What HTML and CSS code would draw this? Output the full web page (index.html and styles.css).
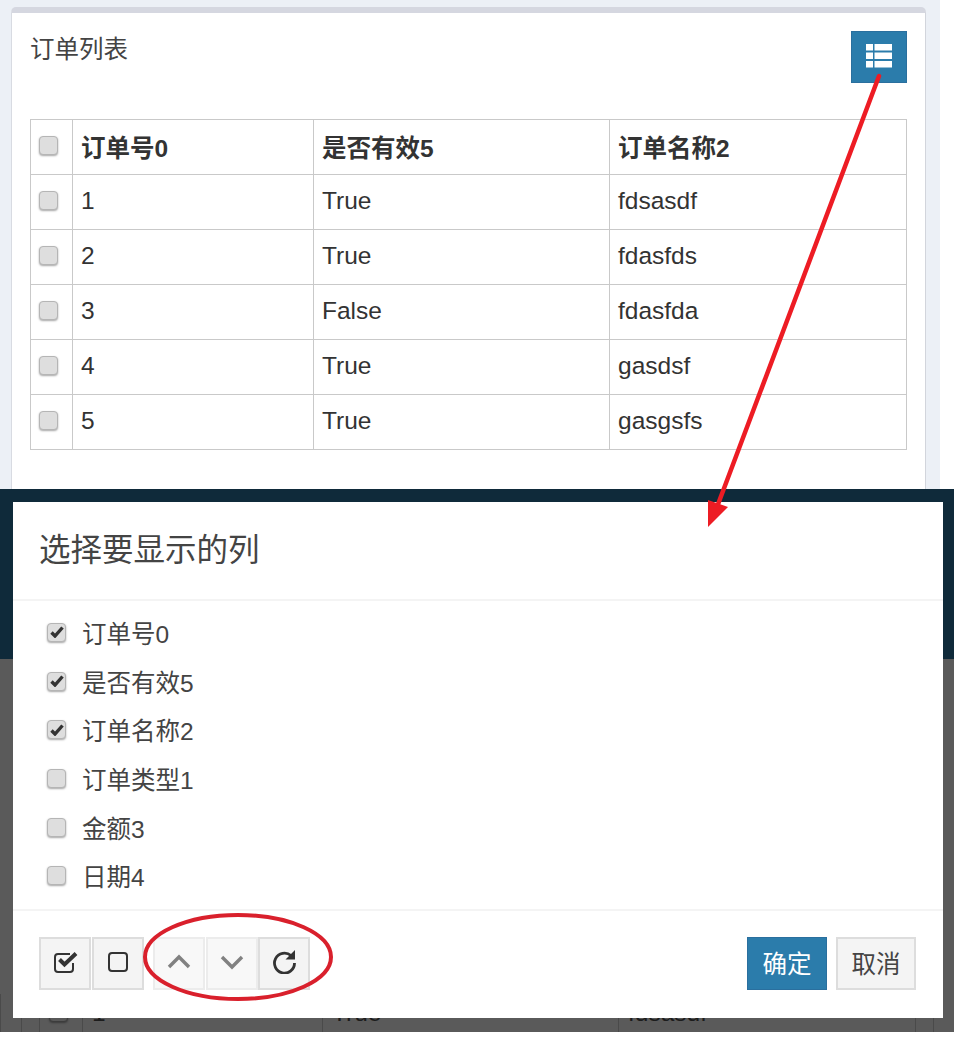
FILE: index.html
```html
<!DOCTYPE html>
<html lang="zh">
<head>
<meta charset="utf-8">
<title>订单列表</title>
<link rel="stylesheet" href="styles.css">
</head>
<body>
<div class="page">
  <section class="card">
    <header class="card-head">
      <h3 class="card-title">订单列表</h3>
      <button class="btn btn-primary btn-icon" type="button">
        <svg width="26" height="24" viewBox="0 0 26 24"><path fill="#fff" d="M0 0h7v6.500H0zM8.500 0H26v6.500H8.500zM0 8.500h7V15H0zM8.500 8.500H26V15H8.500zM0 17h7v6.500H0zM8.500 17H26v6.500H8.500z"/></svg>
      </button>
    </header>
    <table class="grid">
      <thead>
        <tr><th class="c-check"><span class="check"></span></th><th class="c-id">订单号0</th><th class="c-valid">是否有效5</th><th>订单名称2</th></tr>
      </thead>
      <tbody>
        <tr><td><span class="check"></span></td><td>1</td><td>True</td><td>fdsasdf</td></tr>
        <tr><td><span class="check"></span></td><td>2</td><td>True</td><td>fdasfds</td></tr>
        <tr><td><span class="check"></span></td><td>3</td><td>False</td><td>fdasfda</td></tr>
        <tr><td><span class="check"></span></td><td>4</td><td>True</td><td>gasdsf</td></tr>
        <tr><td><span class="check"></span></td><td>5</td><td>True</td><td>gasgsfs</td></tr>
      </tbody>
    </table>
  </section>
</div>

<div class="overlay">
  <div class="overlay-top"></div>
  <div class="overlay-bottom">
    <div class="ghost-row">
      <span class="ghost-cell"></span>
      <span class="ghost-cell"></span>
      <span class="ghost-cell"><span class="check check-ghost"></span></span>
      <span class="ghost-cell">1</span>
      <span class="ghost-cell">True</span>
      <span class="ghost-cell">fdsasdf</span>
      <span class="ghost-cell"></span>
      <span class="ghost-cell"></span>
    </div>
  </div>
  <div class="modal">
    <header class="modal-head"><h4 class="modal-title">选择要显示的列</h4></header>
    <div class="modal-body">
      <label class="opt"><span class="check"><svg class="tick" viewBox="0 0 14 12"><path d="M1.500 6.500 5 10l7.500-8.500" fill="none" stroke="#333" stroke-width="3.400"/></svg></span>订单号0</label>
      <label class="opt"><span class="check"><svg class="tick" viewBox="0 0 14 12"><path d="M1.500 6.500 5 10l7.500-8.500" fill="none" stroke="#333" stroke-width="3.400"/></svg></span>是否有效5</label>
      <label class="opt"><span class="check"><svg class="tick" viewBox="0 0 14 12"><path d="M1.500 6.500 5 10l7.500-8.500" fill="none" stroke="#333" stroke-width="3.400"/></svg></span>订单名称2</label>
      <label class="opt"><span class="check"></span>订单类型1</label>
      <label class="opt"><span class="check"></span>金额3</label>
      <label class="opt"><span class="check"></span>日期4</label>
    </div>
    <footer class="modal-foot">
      <div class="tools">
        <div class="tool-group">
          <button class="btn btn-tool" type="button"><svg class="icon-check" width="24" height="22" viewBox="0 0 24 22"><path d="M19 12v6a3 3 0 0 1-3 3H4a3 3 0 0 1-3-3V6a3 3 0 0 1 3-3h12" fill="none" stroke="#333" stroke-width="2"/><path d="M5.500 8.500 10.500 13.500 22 2.500" fill="none" stroke="#333" stroke-width="4"/></svg></button>
          <button class="btn btn-tool" type="button"><svg class="icon-up" width="20" height="20" viewBox="0 0 20 20"><rect x="1" y="1" width="18" height="18" rx="3" fill="none" stroke="#333" stroke-width="2"/></svg></button>
        </div>
        <div class="tool-group">
          <button class="btn btn-tool btn-disabled" type="button"><svg class="icon-up" width="24" height="24" viewBox="0 0 24 24"><path d="M2 17 12 7l10 10" fill="none" stroke="#333" stroke-width="3.400"/></svg></button>
          <button class="btn btn-tool btn-disabled" type="button"><svg class="icon-up" width="24" height="24" viewBox="0 0 24 24"><path d="M2 7l10 10L22 7" fill="none" stroke="#333" stroke-width="3.400"/></svg></button>
          <button class="btn btn-tool btn-last" type="button"><svg class="icon-up" width="24" height="24" viewBox="0 0 24 24"><path d="M19 5.500A10 10 0 1 0 22.500 13" fill="none" stroke="#333" stroke-width="2.800"/><path d="M23 0v9.500h-9.500z" fill="#333"/></svg></button>
        </div>
      </div>
      <div class="actions">
        <button class="btn btn-primary btn-action" type="button">确定</button>
        <button class="btn btn-action" type="button">取消</button>
      </div>
    </footer>
  </div>
</div>

<svg class="marks" width="956" height="1058" viewBox="0 0 956 1058">
  <path d="M879 76 717 507" fill="none" stroke="#ed1c24" stroke-width="4.500" stroke-linecap="round"/>
  <path d="M708 527V500l20 7z" fill="#ed1c24"/>
  <ellipse cx="238" cy="957" rx="93" ry="42" fill="none" stroke="#d9202c" stroke-width="4"/>
</svg>
</body>
</html>
```
FILE: styles.css
```css
* { box-sizing: border-box; }
html, body { margin: 0; padding: 0; background: #fff; }
body {
  position: relative;
  width: 956px;
  height: 1058px;
  overflow: hidden;
  font-family: "Liberation Sans", "Noto Sans CJK SC", sans-serif;
  font-size: 24.5px;
  color: #333;
}
.page {
  width: 940px;
  height: 1032px;
  padding: 7px 14px 0 11px;
  background: #ecf0f6;
}
.card {
  height: 700px;
  padding: 0 18px;
  background: #fff;
  border-top: 6px solid #d5d7e0;
  border-left: 1px solid #d8dbe2;
  border-right: 1px solid #d2d5dc;
  border-radius: 5px 5px 0 0;
}
.card-head {
  display: flex;
  justify-content: space-between;
  align-items: flex-start;
  height: 106px;
  padding: 18px 0 0 0;
}
.card-title {
  margin: 6px 0 0;
  font-size: 24.5px;
  font-weight: 400;
  line-height: 26px;
  color: #444;
}
.btn {
  display: inline-flex;
  align-items: center;
  justify-content: center;
  padding: 0;
  font: inherit;
  color: #444;
  background: #f4f4f4;
  border: 2px solid #ddd;
}
.btn-primary {
  color: #fff;
  background: #2b7cab;
  border: 1px solid #2a6f9e;
}
.btn-icon {
  width: 56px;
  height: 52px;
  padding-bottom: 3px;
}
.grid {
  width: 877px;
  border-collapse: collapse;
  table-layout: fixed;
}
.grid th, .grid td {
  height: 55px;
  padding: 0 8px;
  border: 1px solid #c9c9c9;
  text-align: left;
  vertical-align: middle;
  line-height: 30px;
}
.grid th {
  padding-top: 3px;
  font-weight: 700;
}
.c-check { width: 42px; }
.c-id { width: 241px; }
.c-valid { width: 296px; }
.grid td { padding-bottom: 2px; }
.grid td:first-child, .grid th:first-child {
  padding: 0 0 3px 8px;
  line-height: 0;
}
.check {
  display: inline-flex;
  align-items: center;
  justify-content: center;
  width: 19px;
  height: 19px;
  vertical-align: top;
  background: #dedede;
  border: 1px solid #b5b5b5;
  border-radius: 4px;
  box-shadow: 0 1px 2px rgba(0, 0, 0, .35);
}
.tick { width: 14px; height: 12px; }
.overlay {
  position: absolute;
  left: 0;
  top: 489px;
  display: flex;
  flex-direction: column;
  width: 954px;
  height: 543px;
}
.overlay-top {
  height: 170px;
  background: #0f2a3a;
}
.overlay-bottom {
  display: flex;
  flex: 1;
  flex-direction: column;
  justify-content: flex-end;
  overflow: hidden;
  background: #5a5a5a;
}
.ghost-row {
  display: grid;
  grid-template-columns: 21px 18px 43px 240px 296px 297px 18px 1fr;
  height: 38px;
  font-size: 24.5px;
  line-height: 38px;
  color: #1c1c1c;
}
.ghost-cell {
  padding-left: 9px;
  border-left: 1px solid #4a4a4a;
}
.check-ghost {
  margin-top: 9px;
  background: #585858;
  border-color: #3c3c3c;
}
.modal {
  position: absolute;
  left: 13px;
  top: 13px;
  display: flex;
  flex-direction: column;
  width: 930px;
  height: 516px;
  background: #fff;
}
.modal-head {
  height: 99px;
  padding: 27px 26px 0;
  border-bottom: 2px solid #f4f4f4;
}
.modal-title {
  margin: 0;
  font-size: 31.5px;
  font-weight: 400;
  line-height: 42px;
  color: #444;
}
.modal-body {
  height: 310px;
  padding: 7px 0 0 34px;
  border-bottom: 2px solid #f4f4f4;
}
.opt {
  display: flex;
  align-items: center;
  gap: 16px;
  height: 48.700px;
  color: #444;
}
.modal-foot {
  display: flex;
  justify-content: space-between;
  flex: 1;
  padding: 26px 27px 0 26px;
}
.tools { display: flex; gap: 9px; }
.tool-group { display: flex; gap: 1px; }
.btn-tool {
  width: 52px;
  height: 53px;
}
.btn-last { margin-left: -1px; }
.icon-up { margin-bottom: 3px; }
.icon-check { margin-bottom: 3px; margin-left: 2px; }
.btn-disabled svg { opacity: .6; }
.btn-disabled { background: #f8f8f8; border-color: #ececec; }
.actions { display: flex; gap: 9px; }
.btn-action {
  width: 80px;
  height: 53px;
  padding-bottom: 2px;
}
.marks {
  position: absolute;
  left: 0;
  top: 0;
  pointer-events: none;
}
```
